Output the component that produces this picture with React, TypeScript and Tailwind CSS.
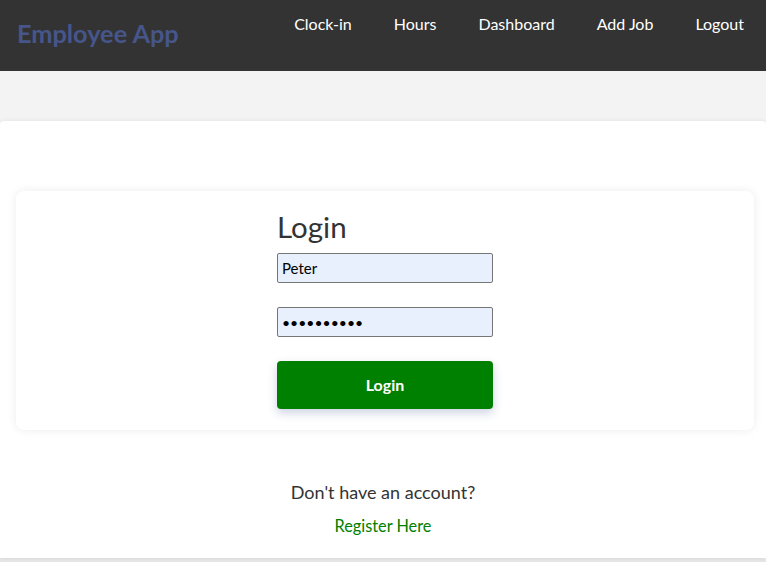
import { useState } from 'react';

const links = ['Clock-in', 'Hours', 'Dashboard', 'Add Job', 'Logout'];

export default function App() {
  const [username, setUsername] = useState('Peter');
  const [password, setPassword] = useState('1234567890');

  return (
    <div className="min-h-[562px] bg-[#e6e6e6] font-['Lato',sans-serif] text-[#333]">
      <header className="h-[71px] bg-[#333333] flex justify-between">
        <h1 className="pl-[17px] pt-[18px] text-[25.3px] font-bold text-[#46568b] leading-[30px]">Employee App</h1>
        <nav className="flex gap-[42px] pr-[22px] pt-[14px]">
          {links.map((link) => (
            <a key={link} href="#" className="text-white text-[16px] leading-[20px]">
              {link}
            </a>
          ))}
        </nav>
      </header>

      <div className="bg-[#f3f3f3] pt-[50px]">
        <main className="bg-white rounded-t-[4px] shadow-[0_0_4px_rgba(0,0,0,0.08)] h-[437px] pt-[70px]">
          <section className="ml-[16px] mr-[12px] rounded-[8px] bg-white shadow-[0_0_10px_rgba(0,0,0,0.08)] pt-[18px] pb-[21px] flex justify-center">
            <form className="w-[216px] flex flex-col" onSubmit={(e) => e.preventDefault()}>
              <h2 className="text-[29.5px] leading-[36px] mb-[8px] text-[#333]">Login</h2>
              <input
                className="h-[30px] bg-[#e8f0fe] border border-[#767676] rounded-[2px] px-[4px] text-[15px] text-black outline-none"
                value={username}
                onChange={(e) => setUsername(e.target.value)}
              />
              <input
                type="password"
                className="mt-[24px] h-[30px] bg-[#e8f0fe] border border-[#767676] rounded-[2px] px-[4px] text-[14px] text-black outline-none"
                value={password}
                onChange={(e) => setPassword(e.target.value)}
              />
              <button className="mt-[24px] h-[48px] bg-[#008000] text-white font-bold text-[16px] rounded-[4px] shadow-[0_4px_10px_rgba(60,80,140,0.25)]">
                Login
              </button>
            </form>
          </section>

          <div className="flex flex-col items-center mt-[50px]">
            <p className="text-[18px] leading-[24px]">Don't have an account?</p>
            <a href="#" className="mt-[12px] text-[16.3px] leading-[20px] text-[#008000]">
              Register Here
            </a>
          </div>
        </main>
      </div>
    </div>
  );
}
